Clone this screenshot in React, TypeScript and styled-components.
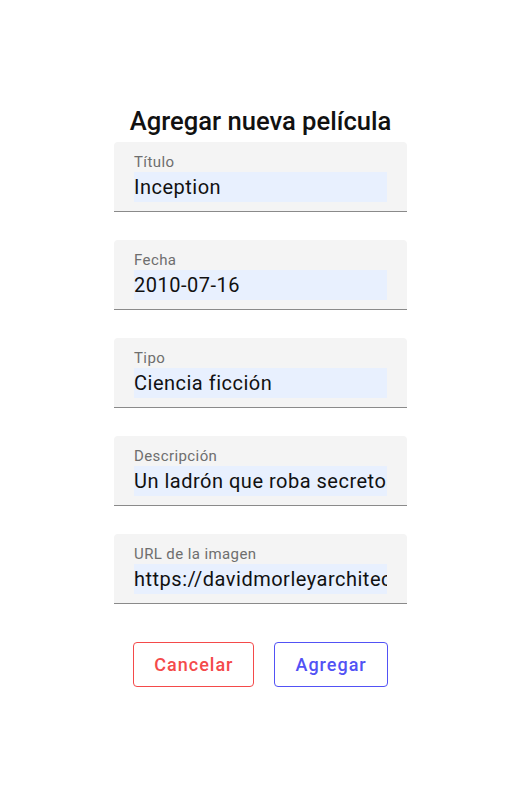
import React from "react";
import styled, { createGlobalStyle } from "styled-components";

const Global = createGlobalStyle`
  html, body { margin: 0; padding: 0; background: #ffffff; }
  body { font-family: Roboto, "Noto Sans", Arial, sans-serif; }
  * { box-sizing: border-box; }
`;

const Page = styled.div`
  width: 521px;
  min-height: 797px;
  display: flex;
  flex-direction: column;
  align-items: center;
  padding-top: 107px;
`;

const Title = styled.h2`
  margin: 0 0 6px 0;
  font-size: 25.6px;
  line-height: 29px;
  font-weight: 500;
  color: #111;
  text-align: center;
`;

const Form = styled.form`
  width: 293px;
  display: flex;
  flex-direction: column;
  gap: 28px;
`;

const Field = styled.label`
  display: flex;
  flex-direction: column;
  background: #f4f4f4;
  border-radius: 4px 4px 0 0;
  border-bottom: 1px solid #8a8a8a;
  padding: 10px 20px 9px 20px;
`;

const Label = styled.span`
  font-size: 15px;
  line-height: 20px;
  color: #6e6e6e;
  letter-spacing: 0.4px;
`;

const Input = styled.input`
  height: 30px;
  border: none;
  outline: none;
  margin: 0;
  padding: 0;
  background: #e8f0fe;
  font-family: Roboto, "Noto Sans", Arial, sans-serif;
  font-size: 20px;
  color: #111;
  letter-spacing: 0.5px;
  width: 100%;
`;

const Actions = styled.div`
  display: flex;
  justify-content: center;
  gap: 20px;
  margin-top: 38px;
`;

const Button = styled.button<{ $color: string }>`
  height: 45px;
  padding: 0 20px;
  background: #fff;
  border: 1px solid ${(p) => p.$color};
  border-radius: 4px;
  color: ${(p) => p.$color};
  font-family: Roboto, "Noto Sans", Arial, sans-serif;
  font-size: 18px;
  font-weight: 500;
  letter-spacing: 1px;
  cursor: pointer;
`;

const fields = [
  { label: "Título", value: "Inception" },
  { label: "Fecha", value: "2010-07-16" },
  { label: "Tipo", value: "Ciencia ficción" },
  { label: "Descripción", value: "Un ladrón que roba secretos corporativos" },
  { label: "URL de la imagen", value: "https://davidmorleyarchitects.co.uk/inception.jpg" },
];

export default function App() {
  return (
    <Page>
      <Global />
      <Title>Agregar nueva película</Title>
      <Form onSubmit={(e) => e.preventDefault()}>
        {fields.map((f) => (
          <Field key={f.label}>
            <Label>{f.label}</Label>
            <Input defaultValue={f.value} />
          </Field>
        ))}
      </Form>
      <Actions>
        <Button type="button" $color="#f44a4a">Cancelar</Button>
        <Button type="button" $color="#5252f5">Agregar</Button>
      </Actions>
    </Page>
  );
}
